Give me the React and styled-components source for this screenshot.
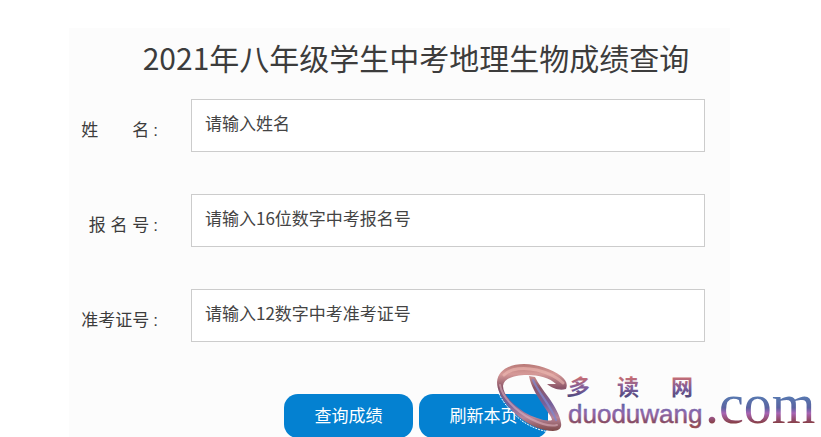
import React from 'react'
import styled, { createGlobalStyle } from 'styled-components'

const fields = [
    { id: 'name', label: '姓\u3000\u3000名', hint: '请输入姓名' },
    { id: 'signup', label: '报 名 号', hint: '请输入16位数字中考报名号' },
    { id: 'ticket', label: '准考证号', hint: '请输入12数字中考准考证号' },
]

const App = () => {
    return (
        <>
            <GlobalStyle />
            <Panel>
                <Title>2021年八年级学生中考地理生物成绩查询</Title>
                <Form onSubmit={e => e.preventDefault()}>
                    {fields.map(field => (
                        <Row key={field.id}>
                            <Label htmlFor={field.id}>
                                {field.label}
                                <Colon>:</Colon>
                            </Label>
                            <TextBox id={field.id} type="text" placeholder={field.hint} />
                        </Row>
                    ))}
                    <Buttons>
                        <Button type="submit">查询成绩</Button>
                        <Button type="button">刷新本页</Button>
                    </Buttons>
                </Form>
            </Panel>
            <Watermark />
        </>
    )
}

const Watermark = () => (
    <Mark width="324" height="76" viewBox="0 0 324 76" role="img" aria-label="多读网 duoduwang.com">
        <defs>
            <linearGradient id="ribbon" x1="0" y1="0" x2="0" y2="1">
                <stop offset="0" stopColor="#b87876" />
                <stop offset="0.15" stopColor="#d69a98" />
                <stop offset="0.35" stopColor="#8c5668" />
                <stop offset="0.6" stopColor="#75609c" />
                <stop offset="0.8" stopColor="#b88498" />
                <stop offset="1" stopColor="#7c4848" />
            </linearGradient>
            <linearGradient id="hanzi" x1="0" y1="0" x2="0" y2="1">
                <stop offset="0.2" stopColor="#d4706c" />
                <stop offset="0.6" stopColor="#7b5c9c" />
                <stop offset="1" stopColor="#40406c" />
            </linearGradient>
            <linearGradient id="latin" gradientUnits="userSpaceOnUse" x1="0" y1="40" x2="0" y2="70">
                <stop offset="0" stopColor="#4d60a0" />
                <stop offset="0.4" stopColor="#9068ac" />
                <stop offset="0.75" stopColor="#86485c" />
                <stop offset="1" stopColor="#a85450" />
            </linearGradient>
            <linearGradient id="suffix" gradientUnits="userSpaceOnUse" x1="0" y1="36" x2="0" y2="63">
                <stop offset="0" stopColor="#5878b0" />
                <stop offset="0.4" stopColor="#5a62a0" />
                <stop offset="0.6" stopColor="#a864b4" />
                <stop offset="1" stopColor="#843c3c" />
            </linearGradient>
        </defs>
        <path
            d="M69 28 C71 23 69 19 64 15 C55 8 40 3 27 3 C13 3 1 9 0 21 C0 31 7 43 22 56 C33 65 46 70 56 70 C62 70 65 67 64 62 C63 54 58 46 52 37 C46 29 41 22 38 16 L32 15 C34 25 39 33 44 41 C49 49 55 56 55 59 C50 61 37 57 27 51 C15 43 6 33 6 25 C7 17 18 14 30 14 C42 14 53 17 59 23 L50 23 C55 27 62 30 69 28 Z"
            fill="url(#ribbon)"
        />
        <path d="M7 14 C14 7 27 6 40 9 C52 12 60 16 66 22" fill="none" stroke="#eebbb4" strokeWidth="3" opacity="0.6" strokeLinecap="round" />
        <path d="M3 24 C5 36 19 50 34 58 C44 63 53 66 60 64" fill="none" stroke="#dcb0bc" strokeWidth="2" opacity="0.6" strokeLinecap="round" />
        <path d="M36 19 C41 31 54 45 59 59" fill="none" stroke="#7f86cc" strokeWidth="2" opacity="0.8" strokeLinecap="round" />
        <path d="M0 27 C3 39 14 51 25 60 C34 66 44 70 53 71" fill="none" stroke="#fff" strokeDasharray="2 1" />
        <Hanzi x="69" y="34" fontStyle="italic">多</Hanzi>
        <Hanzi x="120" y="34">读</Hanzi>
        <Hanzi x="174" y="34">网</Hanzi>
        <Latin x="71" y="62">duoduwang</Latin>
        <Suffix x="208" y="62">.com</Suffix>
    </Mark>
)

export default App

const GlobalStyle = createGlobalStyle`
    body {
        margin: 0;
        background: #fff;
        color: #3c3c3c;
        font-family: "Noto Sans CJK SC", sans-serif;
        overflow: hidden;
    }
    * {
        box-sizing: border-box;
    }
`

const Panel = styled.main`
    margin: 28px 91px 0 69px;
    padding: 7px 25px 0 12px;
    background: #fcfcfc;
`

const Title = styled.h1`
    margin: 0 0 20px 46px;
    font-size: 30px;
    line-height: 44px;
    font-weight: 400;
    text-align: center;
    white-space: nowrap;
`

const Form = styled.form`
    display: flex;
    flex-direction: column;
    gap: 42px;
`

const Row = styled.div`
    display: flex;
    align-items: center;
`

const Label = styled.label`
    flex: 0 0 110px;
    padding: 10px 33px 0 0;
    font-family: "Liberation Sans", "Noto Sans CJK SC", sans-serif;
    font-size: 17px;
    line-height: 24px;
    text-align: right;
    white-space: pre;
`

const Colon = styled.span`
    padding-left: 4px;
`

const TextBox = styled.input`
    flex: 1;
    min-width: 0;
    height: 53px;
    padding: 0 13px 6px;
    border: 1px solid #ccc;
    border-radius: 0;
    background: #fff;
    color: inherit;
    font: inherit;
    font-size: 17px;

    &::placeholder {
        color: #444;
        opacity: 1;
    }
`

const Buttons = styled.div`
    display: flex;
    justify-content: center;
    gap: 6px;
    margin: 10px 0 0 46px;
`

const Button = styled.button`
    width: 129px;
    height: 44px;
    padding: 0 0 4px;
    border: 0;
    border-radius: 14px;
    background: #0481d1;
    color: #fff;
    font: inherit;
    font-size: 17px;
`

/* sits over the page in the lower right corner */
const Mark = styled.svg`
    position: absolute;
    right: 0;
    bottom: 0;
    pointer-events: none;
`

const Hanzi = styled.text`
    fill: url(#hanzi);
    font-family: "Noto Sans CJK SC", sans-serif;
    font-size: 22px;
    font-weight: 700;
`

const Latin = styled.text`
    fill: url(#latin);
    stroke: url(#latin);
    stroke-width: 0.5;
    font-family: "Liberation Sans", sans-serif;
    font-size: 26px;
`

const Suffix = styled.text`
    fill: url(#suffix);
    font-family: "Liberation Serif", serif;
    font-size: 56px;
`
